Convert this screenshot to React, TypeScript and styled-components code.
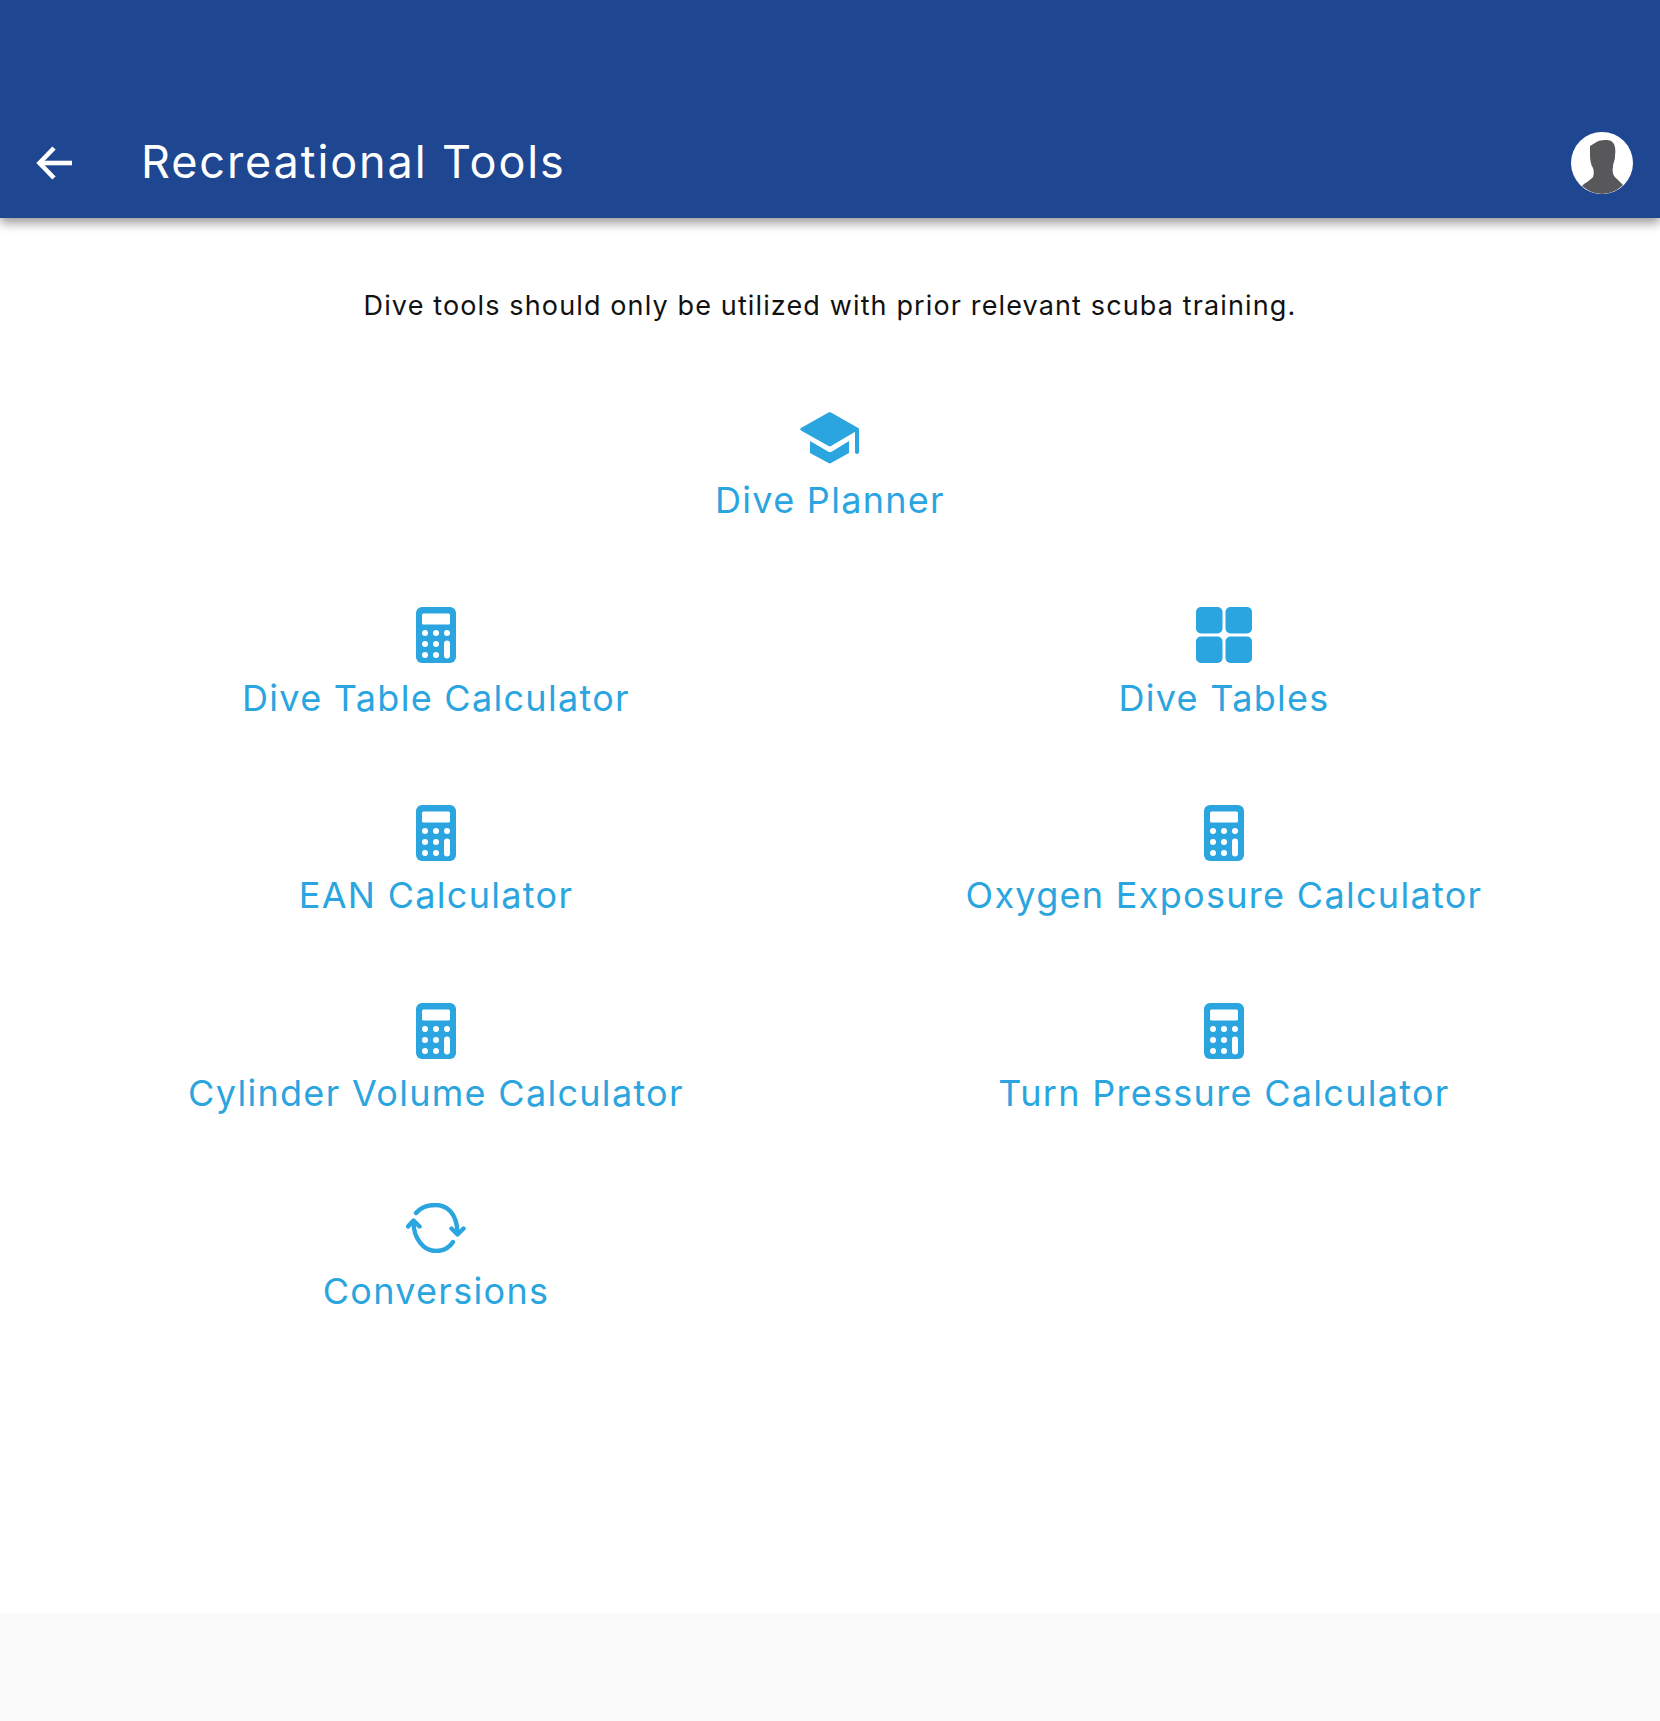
import React from "react";
import styled, { createGlobalStyle } from "styled-components";

const GlobalStyle = createGlobalStyle`
  html, body {
    margin: 0;
    padding: 0;
    background: #fafafa;
    font-family: Inter, "Liberation Sans", sans-serif;
  }
`;

const Page = styled.div`
  width: 1660px;
  height: 1721px;
  display: flex;
  flex-direction: column;
  overflow: hidden;
`;

const Header = styled.header`
  height: 218px;
  flex-shrink: 0;
  box-sizing: border-box;
  padding: 132px 27px 0 31px;
  background: #1e4691;
  display: flex;
  align-items: flex-start;
  box-shadow: 0 5px 10px rgba(0, 0, 0, 0.4);
  position: relative;
  z-index: 1;
`;

const BackButton = styled.div`
  width: 46px;
  height: 62px;
  display: flex;
  align-items: center;
  justify-content: center;
  color: #fff;
`;

const Title = styled.h1`
  margin: 0 0 0 64px;
  flex: 1;
  font-size: 45px;
  line-height: 60px;
  font-weight: 400;
  color: #fff;
  letter-spacing: 1.9px;
`;

const Avatar = styled.div`
  width: 62px;
  height: 62px;
  border-radius: 50%;
  overflow: hidden;
  background: #fff;
`;

const Content = styled.main`
  height: 1395px;
  flex-shrink: 0;
  background: #fff;
  box-sizing: border-box;
  padding: 69px 42px 0;
`;

const Notice = styled.p`
  margin: 0 0 81.500px;
  text-align: center;
  font-size: 27px;
  line-height: 38px;
  color: #111;
  letter-spacing: 1.130px;
`;

const Tools = styled.div`
  display: grid;
  grid-template-columns: 1fr 1fr;
  grid-auto-rows: 197.7px;
`;

const Tool = styled.a<{ $wide?: boolean }>`
  grid-column: ${(p) => (p.$wide ? "1 / 3" : "auto")};
  display: flex;
  flex-direction: column;
  align-items: center;
  color: #2aa5e0;
`;

const IconBox = styled.div`
  height: 62px;
  display: flex;
  align-items: center;
  justify-content: center;
`;

const Label = styled.span`
  font-size: 36px;
  line-height: 50px;
  letter-spacing: 1.300px;
  margin-top: 6.500px;
`;

const ArrowIcon = () => (
  <svg width="36" height="34" viewBox="0 0 36 34" fill="none" stroke="currentColor" strokeWidth="4.600">
    <path d="M36 17H4" />
    <path d="M18 2L3.500 17L18 32" />
  </svg>
);

const PersonIcon = () => (
  <svg width="62" height="62" viewBox="0 0 62 62">
    <path
      fill="#58585a"
      d="M19 14L24 11C27 8 36 7 40 9C44 11 45 17 44 24C44 29 42 31 42 35C41 40 42 44 46 47L52 53C46 59 38 62 31 62C24 62 17 59 11 54C15 50 20 48 22 45C23 42 23 39 22 36C20 33 19 28 19 24Z"
    />
  </svg>
);

const CapIcon = () => (
  <svg width="60" height="52" viewBox="0 0 60 52" fill="currentColor">
    <path d="M28.500 0.500C29.500 0 30 0 31 0.500L59 16.500V17.500L31 34C30 34.500 29.500 34.500 28.500 34L1 18.500C0 18 0 16.500 1 16Z" />
    <path d="M10 29L28 39.500C29.500 40.300 30.500 40.300 32 39.500L49 29V41L31 51C30 51.500 29.500 51.500 28.500 51L10 41Z" />
    <rect x="55" y="17" width="4" height="25" rx="2" />
  </svg>
);

const CalculatorIcon = () => (
  <svg width="40" height="56" viewBox="0 0 40 56">
    <rect width="40" height="56" rx="6" fill="currentColor" />
    <rect x="6" y="6.500" width="28" height="11" rx="1.500" fill="#fff" />
    <g fill="#fff">
      <circle cx="9" cy="26" r="3" />
      <circle cx="20" cy="26" r="3" />
      <circle cx="31" cy="26" r="3" />
      <circle cx="9" cy="37" r="3" />
      <circle cx="20" cy="37" r="3" />
      <circle cx="9" cy="48" r="3" />
      <circle cx="20" cy="48" r="3" />
      <rect x="28" y="33.500" width="6" height="18" rx="3" />
    </g>
  </svg>
);

const GridIcon = () => (
  <svg width="56" height="56" viewBox="0 0 56 56" fill="currentColor">
    <rect width="26.500" height="26.500" rx="5" />
    <rect x="29.500" width="26.500" height="26.500" rx="5" />
    <rect y="29.500" width="26.500" height="26.500" rx="5" />
    <rect x="29.500" y="29.500" width="26.500" height="26.500" rx="5" />
  </svg>
);

const SyncIcon = () => (
  <svg width="60" height="50" viewBox="0 0 60 50" fill="none" stroke="currentColor" strokeWidth="4.400" strokeLinecap="round" strokeLinejoin="round">
    <path d="M10 10C15 4 22 2 29 2C41 2 51 10 51.500 30" />
    <path d="M45.500 25.500L51.500 31.500L57.500 25.500" />
    <path d="M7.500 19C7.500 36 18 48 30 48C37 48 43 45 47 39" />
    <path d="M2 23.500L7.500 17.500L13.500 23.500" />
  </svg>
);

const tools = [
  { label: "Dive Planner", icon: <CapIcon />, wide: true },
  { label: "Dive Table Calculator", icon: <CalculatorIcon /> },
  { label: "Dive Tables", icon: <GridIcon /> },
  { label: "EAN Calculator", icon: <CalculatorIcon /> },
  { label: "Oxygen Exposure Calculator", icon: <CalculatorIcon /> },
  { label: "Cylinder Volume Calculator", icon: <CalculatorIcon /> },
  { label: "Turn Pressure Calculator", icon: <CalculatorIcon /> },
  { label: "Conversions", icon: <SyncIcon /> },
];

const App = () => {
  return (
    <Page>
      <GlobalStyle />
      <Header>
        <BackButton>
          <ArrowIcon />
        </BackButton>
        <Title>Recreational Tools</Title>
        <Avatar>
          <PersonIcon />
        </Avatar>
      </Header>
      <Content>
        <Notice>Dive tools should only be utilized with prior relevant scuba training.</Notice>
        <Tools>
          {tools.map((tool) => (
            <Tool key={tool.label} $wide={tool.wide}>
              <IconBox>{tool.icon}</IconBox>
              <Label>{tool.label}</Label>
            </Tool>
          ))}
        </Tools>
      </Content>
    </Page>
  );
};

export default App;
